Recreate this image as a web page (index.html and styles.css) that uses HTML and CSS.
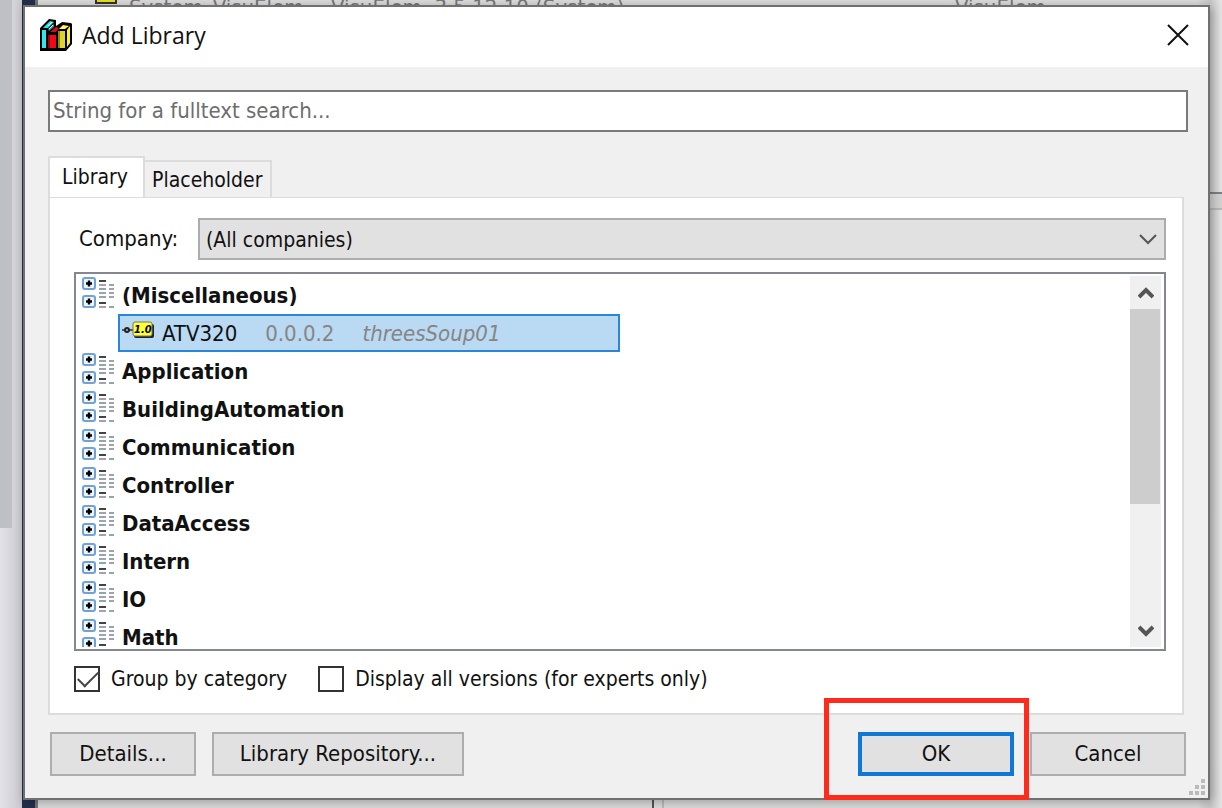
FILE: index.html
```html
<!DOCTYPE html>
<html lang="en">
<head>
    <meta charset="UTF-8">
    <meta name="viewport" content="width=device-width, initial-scale=1.0">
    <title>Add Library</title>
    <link rel="stylesheet" href="styles.css">
</head>
<body>
<!-- Shared icons -->
<svg class="sprite" aria-hidden="true">
    <symbol id="icon-category" viewBox="0 0 32 34">
        <g fill="#eef5fc" stroke="#6fa3d6" stroke-width="2">
            <rect x="1" y="2" width="12" height="11" rx="2"/>
            <rect x="1" y="20" width="12" height="11" rx="2"/>
        </g>
        <path d="M4 7.5h6M7 4.5v6M4 25.5h6M7 22.5v6" stroke="#000" stroke-width="2.4"/>
        <path d="M17 5h7M17 27h7" stroke="#444" stroke-width="2"/>
        <path d="M17 9h7M17 17h7M27 13h5M27 21h5M17 31h7" stroke="#a79fb8" stroke-width="2"/>
        <path d="M17 13h7M17 21h7M27 9h5M27 17h5M27 31h5" stroke="#8eaaa4" stroke-width="2"/>
    </symbol>
</svg>

<div class="backdrop" aria-hidden="true">
    <div class="side-thumb"></div>
    <div class="side-edge"></div>
    <div class="back-row">
        <span class="back-icon"></span>
        <span class="back-name">System_VisuElem</span>
        <span class="back-version">VisuElem, 3.5.12.10 (System)</span>
        <span>VisuElem</span>
    </div>
    <div class="right-strip"></div>
    <div class="bottom-split"></div>
</div>

<main class="dialog" role="dialog" aria-labelledby="title">
    <header class="title-bar">
        <svg class="books" viewBox="0 0 32 32" aria-hidden="true">
            <path d="M0 9l9-9 7 1v6l6-4 9 1 1 1v20l-6 7H0z" fill="#000"/>
            <path d="M2 11h4v18H2z" fill="#2fe6ef"/>
            <path d="M3 9l7-7 4 1-6 6z" fill="#2fe6ef"/>
            <path d="M8 10l6-5v3l-5 4z" fill="#159aa0"/>
            <path d="M8 7l4-4M9 10l4-4" stroke="#fff" stroke-width="1"/>
            <path d="M8 16h8v13H8z" fill="#f00a18"/>
            <path d="M8 16h2v13H8z" fill="#8e0710"/>
            <path d="M10 13l6-5 3 1-3 4z" fill="#d90b18"/>
            <path d="M18 12h7v17h-7z" fill="#ded52a"/>
            <path d="M18 12h2v17h-2z" fill="#8e841a"/>
            <path d="M19 10l4-4 6 1-4 3z" fill="#fff45a"/>
            <path d="M27 11l3-4v17l-3 4z" fill="#fff02c"/>
        </svg>
        <h1 id="title">Add Library</h1>
        <button class="close" type="button" aria-label="Close">
            <svg viewBox="0 0 22 22"><path d="M1 1l20 20M21 1L1 21" fill="none" stroke="#111" stroke-width="2"/></svg>
        </button>
    </header>

    <form class="content">
        <input class="search" type="text" placeholder="String for a fulltext search..." aria-label="Fulltext search">

        <div class="tabs" role="tablist">
            <button class="tab active" type="button" role="tab" aria-selected="true">Library</button>
            <button class="tab" type="button" role="tab" aria-selected="false">Placeholder</button>
        </div>

        <section class="panel" role="tabpanel">
            <div class="company">
                <label for="company">Company:</label>
                <div class="select-wrap">
                    <select id="company">
                        <option>(All companies)</option>
                    </select>
                    <svg class="chevron" viewBox="0 0 18 12" aria-hidden="true"><path d="M1 2l8 8 8-8" fill="none" stroke="#555" stroke-width="2"/></svg>
                </div>
            </div>

            <div class="library-list">
                <ul class="tree">
                    <li><svg class="category-icon"><use href="#icon-category"/></svg>(Miscellaneous)</li>
                    <li class="entry">
                        <svg class="version-icon" viewBox="0 0 32 20" aria-hidden="true">
                            <path d="M0 9h3M7 9h4" stroke="#555" stroke-width="2"/>
                            <circle cx="5" cy="9" r="2" fill="#bbb" stroke="#222" stroke-width="2"/>
                            <rect x="12" y="3" width="20" height="14" rx="2" fill="#222"/>
                            <rect x="11" y="1" width="19" height="14" rx="2" fill="#ffff35" stroke="#777" stroke-width="1"/>
                            <text x="12" y="12" class="version-text">1.0</text>
                        </svg>
                        <span class="entry-name">ATV320</span>
                        <span class="entry-version">0.0.0.2</span>
                        <em>threesSoup01</em>
                    </li>
                    <li><svg class="category-icon"><use href="#icon-category"/></svg>Application</li>
                    <li><svg class="category-icon"><use href="#icon-category"/></svg>BuildingAutomation</li>
                    <li><svg class="category-icon"><use href="#icon-category"/></svg>Communication</li>
                    <li><svg class="category-icon"><use href="#icon-category"/></svg>Controller</li>
                    <li><svg class="category-icon"><use href="#icon-category"/></svg>DataAccess</li>
                    <li><svg class="category-icon"><use href="#icon-category"/></svg>Intern</li>
                    <li><svg class="category-icon"><use href="#icon-category"/></svg>IO</li>
                    <li><svg class="category-icon"><use href="#icon-category"/></svg>Math</li>
                </ul>
                <div class="scrollbar">
                    <button type="button" aria-label="Scroll up">
                        <svg viewBox="0 0 16 14"><path d="M1 11l7-7 7 7" fill="none" stroke="#555" stroke-width="4"/></svg>
                    </button>
                    <div class="track"><div class="thumb"></div></div>
                    <button type="button" aria-label="Scroll down">
                        <svg viewBox="0 0 16 14"><path d="M1 3l7 7 7-7" fill="none" stroke="#555" stroke-width="4"/></svg>
                    </button>
                </div>
            </div>

            <div class="options">
                <label><input type="checkbox" checked>Group by category</label>
                <label><input type="checkbox">Display all versions (for experts only)</label>
            </div>
        </section>

        <footer class="actions">
            <button class="details" type="button">Details...</button>
            <button class="repository" type="button">Library Repository...</button>
            <span class="ok-wrap">
                <button class="ok" type="submit">OK</button>
                <span class="highlight"></span>
            </span>
            <button class="cancel" type="button">Cancel</button>
        </footer>
    </form>

    <svg class="grip" viewBox="0 0 16 16" aria-hidden="true">
        <path d="M12 0h4v4h-4zM6 6h4v4H6zM12 6h4v4h-4zM0 12h4v4H0zM6 12h4v4H6zM12 12h4v4h-4z" fill="#bbb"/>
    </svg>
</main>
</body>
</html>
```
FILE: styles.css
```css
* {
    box-sizing: border-box;
}

body {
    margin: 0;
    min-height: 100vh;
    padding: 5px 12px 8px 23px;
    display: flex;
    position: relative;
    overflow: hidden;
    background: #dcdcdc;
    color: #111;
    font-family: Tahoma, "DejaVu Sans Condensed", "DejaVu Sans", sans-serif;
    font-size: 22px;
    line-height: 28px;
}

button,
input,
select {
    font: inherit;
    color: inherit;
    margin: 0;
}

button {
    padding: 0;
    border: 0;
    background: none;
}

svg {
    display: block;
    flex: none;
}

.sprite {
    position: absolute;
    width: 0;
    height: 0;
}

/* Application window behind the dialog */
.backdrop {
    position: absolute;
    inset: 0;
    overflow: hidden;
    background: linear-gradient(90deg, #dcdcdc 98%, #c8c8c8 99%, #e4e4e4 100%);
}

.side-thumb {
    position: absolute;
    inset: 0 auto 0 0;
    width: 22px;
    background: linear-gradient(90deg, #bfc0c5 0 12px, transparent 12px) 0 0 / 22px 528px no-repeat,
        linear-gradient(90deg, #e2e2e8, #c9c9ce);
}

.side-edge {
    position: absolute;
    inset: 0 auto 0 22px;
    width: 16px;
    background: #22304d;
    border-right: 3px solid #777;
}

.back-row {
    position: absolute;
    top: -6px;
    left: 95px;
    right: 0;
    display: grid;
    grid-template-columns: 34px 202px 624px auto;
    color: #777;
    white-space: nowrap;
}

.back-icon {
    width: 22px;
    height: 10px;
    background: #e8e020;
    border: 2px solid #333;
}

.right-strip {
    position: absolute;
    right: 0;
    top: 192px;
    width: 13px;
    height: 18px;
    background: #d2d2d2;
    border-top: 2px solid #7c8087;
    border-bottom: 2px solid #b8b8b8;
}

.bottom-split {
    position: absolute;
    left: 652px;
    bottom: 0;
    width: 12px;
    height: 10px;
    border-left: 2px solid #555;
    border-right: 2px solid #bbb;
}

.dialog {
    position: relative;
    flex: 1;
    display: flex;
    flex-direction: column;
    background: #f0f0f0;
    border: 2px solid #707070;
    box-shadow: 2px 2px 10px rgba(0,0,0,0.3);
}

.title-bar {
    display: flex;
    align-items: center;
    height: 60px;
    padding: 0 19px 4px 15px;
    background: #fff;
}

.books {
    width: 32px;
    height: 32px;
}

.title-bar h1 {
    flex: 1;
    margin: 0 0 0 10px;
    font-family: "Segoe UI", "Open Sans", sans-serif;
    font-size: 23px;
    font-weight: 400;
}

.close svg {
    width: 22px;
    height: 22px;
}

.content {
    flex: 1;
    display: flex;
    flex-direction: column;
    padding: 23px 20px 22px 23px;
}

.search {
    height: 42px;
    width: 100%;
    padding: 0 3px 2px;
    border: 2px solid #7a7a7a;
    border-radius: 0;
    background: #fff;
}

.search::placeholder {
    color: #6d6d6d;
    opacity: 1;
}

.tabs {
    display: flex;
    align-items: flex-end;
    margin-top: 24px;
}

.tab {
    height: 37px;
    padding: 0 8px 0 7px;
    border: 2px solid #dcdcdc;
    border-left: 0;
    border-bottom: 0;
    font-size: 21px;
}

.tab.active {
    height: 41px;
    padding: 0 15px 2px 12px;
    border-left: 2px solid #dcdcdc;
    background: #fff;
}

.panel {
    flex: 1;
    display: flex;
    flex-direction: column;
    margin-right: 4px;
    padding: 21px 16px 20px 24px;
    background: #fff;
    border: 2px solid #dcdcdc;
    border-top: 0;
    box-shadow: inset 0 2px 0 -1px #dcdcdc;
}

.company {
    display: grid;
    grid-template-columns: 124px 1fr;
    align-items: center;
}

.company label {
    padding-left: 5px;
}

.select-wrap {
    position: relative;
}

.select-wrap select {
    appearance: none;
    display: block;
    width: 100%;
    height: 42px;
    padding: 2px 40px 0 6px;
    background: #e1e1e1;
    border: 2px solid #acacac;
    border-radius: 0;
    font-size: 21px;
}

.chevron {
    position: absolute;
    top: 15px;
    right: 9px;
    width: 18px;
    height: 12px;
    pointer-events: none;
}

.library-list {
    flex: 1 1 0;
    min-height: 0;
    display: flex;
    margin-top: 12px;
    padding: 2px 3px;
    border: 2px solid #828790;
}

.tree {
    flex: 1;
    margin: 0;
    padding: 0 0 0 3px;
    list-style: none;
    overflow: hidden;
    font-weight: 700;
}

.tree li {
    display: flex;
    align-items: center;
    gap: 8px;
    height: 38px;
    padding-top: 2px;
}

.category-icon {
    width: 32px;
    height: 34px;
    margin-bottom: 6px;
}

.tree .entry {
    width: 502px;
    margin-left: 36px;
    padding: 2px 2px 0;
    border: 2px solid #2a86d9;
    background: #bad9f2;
    font-weight: 400;
}

.version-icon {
    width: 32px;
    height: 20px;
    margin-bottom: 6px;
}

.version-text {
    font: italic 700 11px "DejaVu Sans Condensed", sans-serif;
}

.entry-version,
.entry em {
    margin-left: 20px;
    color: #858585;
}

.scrollbar {
    display: flex;
    flex-direction: column;
    width: 31px;
    background: #f0f0f0;
}

.scrollbar button {
    display: grid;
    place-items: center;
    height: 33px;
}

.scrollbar svg {
    width: 16px;
    height: 14px;
}

.track {
    flex: 1;
}

.thumb {
    height: 64%;
    margin-right: 1px;
    background: #cdcdcd;
}

.options {
    display: flex;
    gap: 31px;
    margin-top: 14px;
    font-size: 21px;
}

.options label {
    display: flex;
    align-items: center;
    gap: 11px;
}

.options input {
    appearance: none;
    width: 26px;
    height: 26px;
    border: 2px solid #333;
    background: #fff;
}

.options input:checked::before {
    content: "";
    display: block;
    width: 18px;
    height: 9px;
    margin: 3px 2px;
    border: solid #444;
    border-width: 0 0 2px 2px;
    transform: rotate(-45deg);
}

.actions {
    display: flex;
    gap: 16px;
    margin: 17px 2px 0;
}

.actions button {
    height: 44px;
    background: #e1e1e1;
    border: 2px solid #adadad;
}

.actions .details {
    width: 146px;
}

.actions .repository {
    width: 252px;
}

.actions .ok,
.actions .cancel {
    width: 156px;
}

.actions .ok {
    display: block;
    border: 4px solid #1177d7;
}

.ok-wrap {
    position: relative;
    margin-left: auto;
}

/* Marker around the default button */
.highlight {
    position: absolute;
    inset: -34px -15px -24px -34px;
    border: 5px solid #ff2a1c;
    pointer-events: none;
}

.grip {
    position: absolute;
    right: 3px;
    bottom: 3px;
    width: 16px;
    height: 16px;
}
```
